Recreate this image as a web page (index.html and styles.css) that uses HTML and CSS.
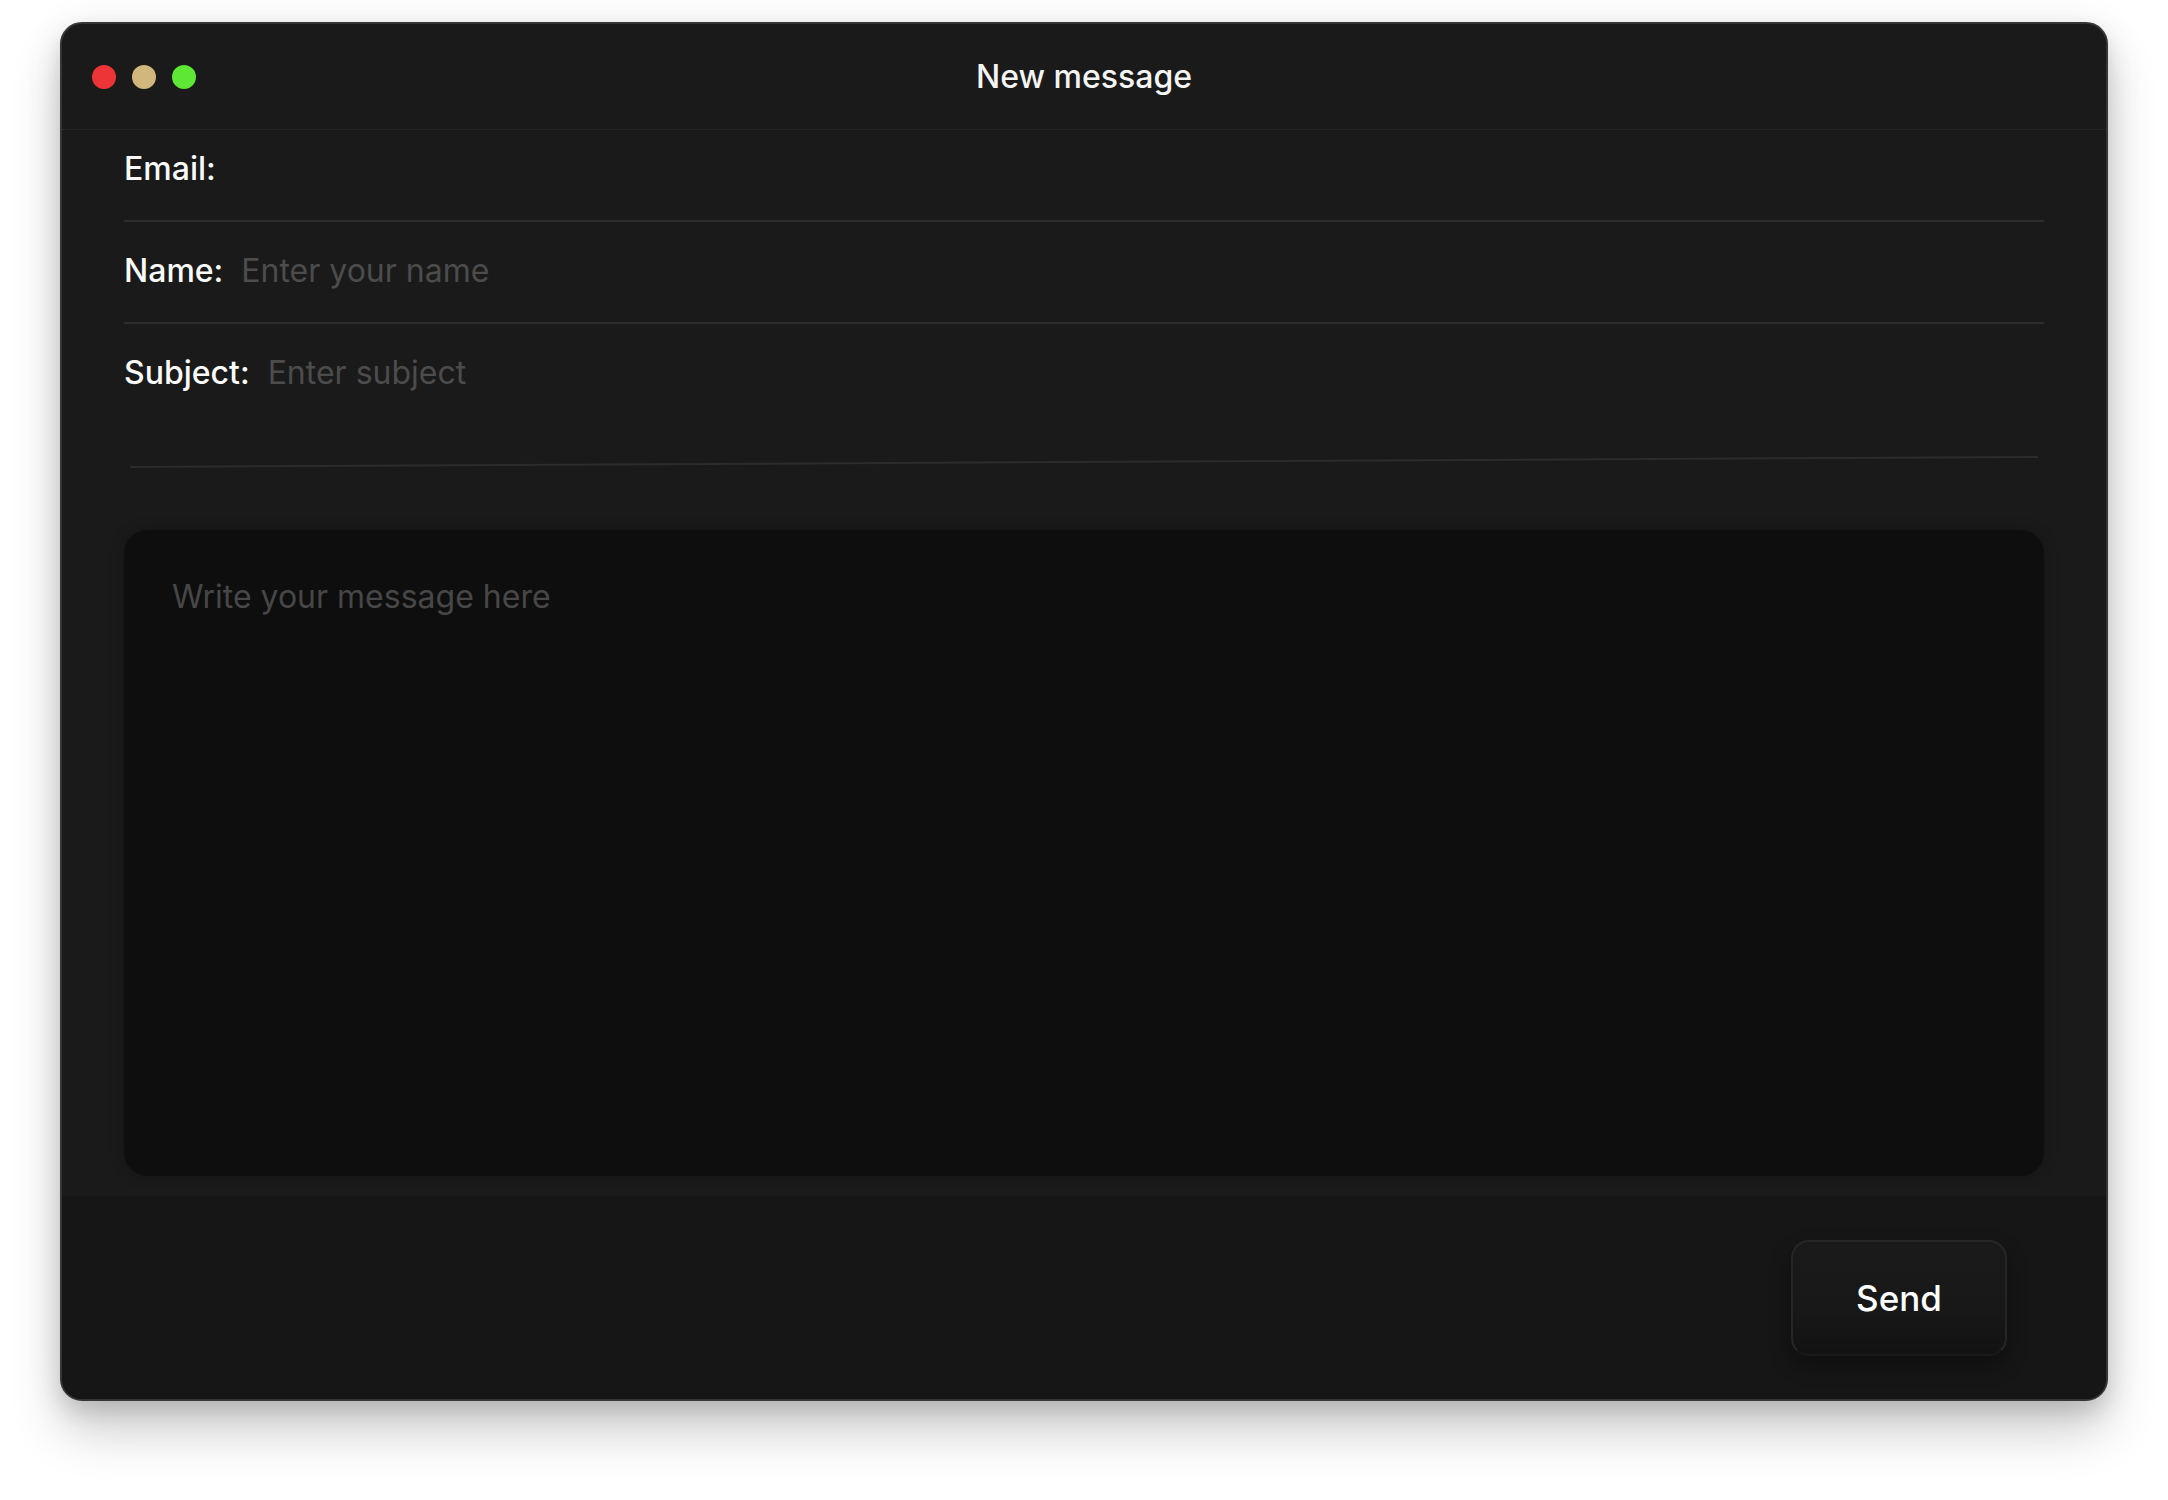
FILE: index.html
```html
<!DOCTYPE html>
<html lang="en">
<head>
    <meta charset="UTF-8">
    <meta name="viewport" content="width=device-width, initial-scale=1.0">
    <title>New message</title>
    <link rel="stylesheet" href="styles.css">
</head>
<body>
    <div class="window">
        <div class="titlebar">
            <div class="lights">
                <span class="light red"></span>
                <span class="light yellow"></span>
                <span class="light green"></span>
            </div>
            <div class="title">New message</div>
            <div></div>
        </div>

        <form class="compose" onsubmit="return false">
            <label class="field first">
                <span class="label">Email:</span>
                <input type="email">
            </label>
            <label class="field">
                <span class="label">Name:</span>
                <input type="text" placeholder="Enter your name">
            </label>
            <label class="field last">
                <span class="label">Subject:</span>
                <input type="text" placeholder="Enter subject">
            </label>
            <hr class="tilted">
            <textarea class="message" placeholder="Write your message here"></textarea>
        </form>

        <div class="footer">
            <button class="send">Send</button>
        </div>
    </div>
</body>
</html>
```

FILE: styles.css
```css
body {
    font-family: Inter, "Noto Sans", sans-serif;
    margin: 0;
    min-height: 100vh;
    box-sizing: border-box;
    background-color: #fff;
    padding-top: 22px;
}

.window {
    width: 2048px;
    margin: 0 auto;
    box-sizing: border-box;
    background-color: #1a1a1a;
    border: 2px solid #363636;
    border-radius: 22px;
    overflow: hidden;
    box-shadow: 0 30px 50px rgba(0, 0, 0, 0.2), 0 10px 20px rgba(0, 0, 0, 0.1), 0 0 40px rgba(0, 0, 0, 0.06);
}

.titlebar {
    display: grid;
    grid-template-columns: 1fr auto 1fr;
    align-items: center;
    height: 105px;
    border-bottom: 1px dotted #2e2e2e;
}

.lights {
    display: flex;
    gap: 16px;
    padding-left: 30px;
}

.light {
    width: 24px;
    height: 24px;
    border-radius: 50%;
}

.red { background-color: #ed3538; }
.yellow { background-color: #d2b77c; }
.green { background-color: #5ee734; }

.title {
    color: #f4f4f4;
    font-size: 32px;
    font-weight: 500;
}

.compose {
    display: flex;
    flex-direction: column;
    padding: 0 62px 20px;
}

.field {
    display: flex;
    align-items: baseline;
    gap: 18px;
    padding: 30px 0 32px;
    border-bottom: 2px solid #2c2c2c;
}

.field.first {
    padding-top: 20px;
}

.field.last {
    border-bottom: none;
}

.label {
    color: #fafafa;
    font-size: 32px;
    font-weight: 500;
    line-height: 38px;
}

input, textarea {
    font-family: inherit;
    font-size: 32px;
    line-height: 38px;
    color: #eee;
    background: transparent;
    border: none;
    outline: none;
    padding: 0;
}

input {
    flex: 1;
}

input::placeholder, textarea::placeholder {
    color: #4c4c4c;
}

.tilted {
    margin: 37px 6px 67px;
    height: 2px;
    border: none;
    background-color: #2c2c2c;
    transform: rotate(-0.3deg);
}

.message {
    height: 646px;
    box-sizing: border-box;
    padding: 48px;
    background-color: #0e0e0e;
    border-radius: 24px;
    resize: none;
    box-shadow: 0 0 14px rgba(0, 0, 0, 0.25);
}

.message::placeholder {
    color: #474747;
}

.footer {
    display: flex;
    justify-content: flex-end;
    padding: 44px 99px 43px;
    background-color: #161616;
}

.send {
    width: 216px;
    height: 116px;
    font-family: inherit;
    font-size: 35px;
    font-weight: 500;
    color: #fff;
    background: linear-gradient(#1a1a1a, #181818 60%, #121212);
    border: 2px solid #262626;
    border-bottom-color: #181818;
    border-radius: 18px;
    box-shadow: 0 10px 20px rgba(0, 0, 0, 0.35);
    cursor: pointer;
}
```
